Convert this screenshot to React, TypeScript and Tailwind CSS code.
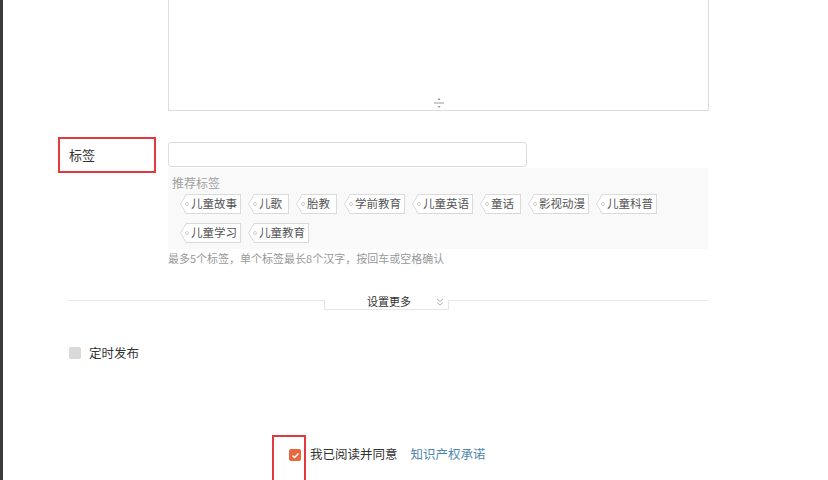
const font = "font-['Noto_Sans_CJK_SC','Noto_Sans',sans-serif]";

const tags = [
  "儿童故事",
  "儿歌",
  "胎教",
  "学前教育",
  "儿童英语",
  "童话",
  "影视动漫",
  "儿童科普",
  "儿童学习",
  "儿童教育",
];

function Tag({ text }: { text: string }) {
  return (
    <span className="relative inline-flex h-[20px] min-w-[41px] items-center bg-[#dadada] [clip-path:polygon(6px_0,100%_0,100%_100%,6px_100%,0_50%)]">
      <span className="absolute inset-[1px] bg-white [clip-path:polygon(5.5px_0,100%_0,100%_100%,5.5px_100%,0_50%)]" />
      <span className="relative ml-[5px] h-[4px] w-[4px] shrink-0 rounded-full border border-[#cfcfcf]" />
      <span className="relative ml-[2px] pr-[4px] text-[11.5px] leading-none text-[#555]">{text}</span>
    </span>
  );
}

export default function App() {
  return (
    <div className={`flex h-[480px] w-[828px] overflow-hidden bg-white ${font}`}>
      <div className="w-[3px] shrink-0 bg-[#3b3b3b]" />

      <div className="flex-1">
        {/* textarea bottom */}
        <div className="ml-[165px] flex h-[111px] w-[541px] items-end justify-center border-x border-b border-[#dcdcdc] pb-[2px]">
          <svg width="12" height="10" viewBox="0 0 12 10" className="text-[#999]">
            <path d="M1 5h10" stroke="currentColor" strokeWidth="1" />
            <path d="M5 1.5h2L6 0.5z M5 8.5h2L6 9.5z" fill="currentColor" stroke="currentColor" strokeWidth="0.8" />
          </svg>
        </div>

        {/* tags */}
        <div className="mt-[26px] flex items-start">
          <div className="ml-[55px] flex h-[36px] w-[98px] items-center border-2 border-[#e03a3e] pl-[9px] text-[13px] text-[#333]">
            标签
          </div>
          <div className="ml-[12px] mt-[5px] flex flex-col">
            <div className="h-[25px] w-[359px] rounded-[3px] border border-[#dcdcdc] bg-white" />
            <div className="mt-[1px] w-[540px] bg-[#f9f9f9] pb-[6px] pt-[7px]">
              <div className="pl-[4px] text-[12px] leading-[16px] text-[#a0a0a0]">推荐标签</div>
              <div className="mt-[3px] flex flex-wrap gap-x-[7px] gap-y-[9px] pl-[12px]">
                {tags.map((t) => (
                  <Tag key={t} text={t} />
                ))}
              </div>
            </div>
            <div className="mt-[1px] text-[11px] leading-[16px] text-[#999]">
              最多5个标签，单个标签最长8个汉字，按回车或空格确认
            </div>
          </div>
        </div>

        {/* more settings */}
        <div className="ml-[65px] mt-[34px] flex w-[640px] items-start">
          <div className="w-[256px] border-t border-[#e6e6e6]" />
          <div className="relative flex h-[10px] w-[125px] items-start border-x border-b border-[#e6e6e6]">
            <span className="-mt-[6px] ml-[42px] text-[11px] leading-[14px] text-[#333]">设置更多</span>
            <svg width="8" height="8" viewBox="0 0 8 8" className="-mt-[2px] ml-[25px] text-[#aaa]">
              <path d="M1 1l3 2.5L7 1M1 4.5L4 7l3-2.5" fill="none" stroke="currentColor" strokeWidth="0.9" />
            </svg>
          </div>
          <div className="flex-1 border-t border-[#e6e6e6]" />
        </div>

        {/* schedule */}
        <div className="ml-[66px] mt-[35px] flex h-[16px] items-center">
          <span className="h-[12px] w-[12px] rounded-[2px] bg-[#d9d9d9]" />
          <span className="ml-[8px] text-[12.5px] leading-[16px] text-[#333]">定时发布</span>
        </div>

        {/* agreement */}
        <div className="ml-[269px] mt-[74px] flex items-start">
          <div className="h-[60px] w-[34px] shrink-0 border-2 border-[#e03a3e] pl-[15px] pt-[12px]">
            <span className="flex h-[12px] w-[12px] items-center justify-center rounded-[2px] bg-[#e8673c]">
              <svg width="9" height="9" viewBox="0 0 9 9">
                <path d="M1.5 4.5l2 2 4-4" fill="none" stroke="white" strokeWidth="1.5" />
              </svg>
            </span>
          </div>
          <span className="ml-[4px] mt-[11px] text-[12.5px] leading-[16px] text-[#333]">我已阅读并同意</span>
          <span className="ml-[13px] mt-[11px] text-[12.5px] leading-[16px] text-[#4f87ae]">知识产权承诺</span>
        </div>
      </div>
    </div>
  );
}
